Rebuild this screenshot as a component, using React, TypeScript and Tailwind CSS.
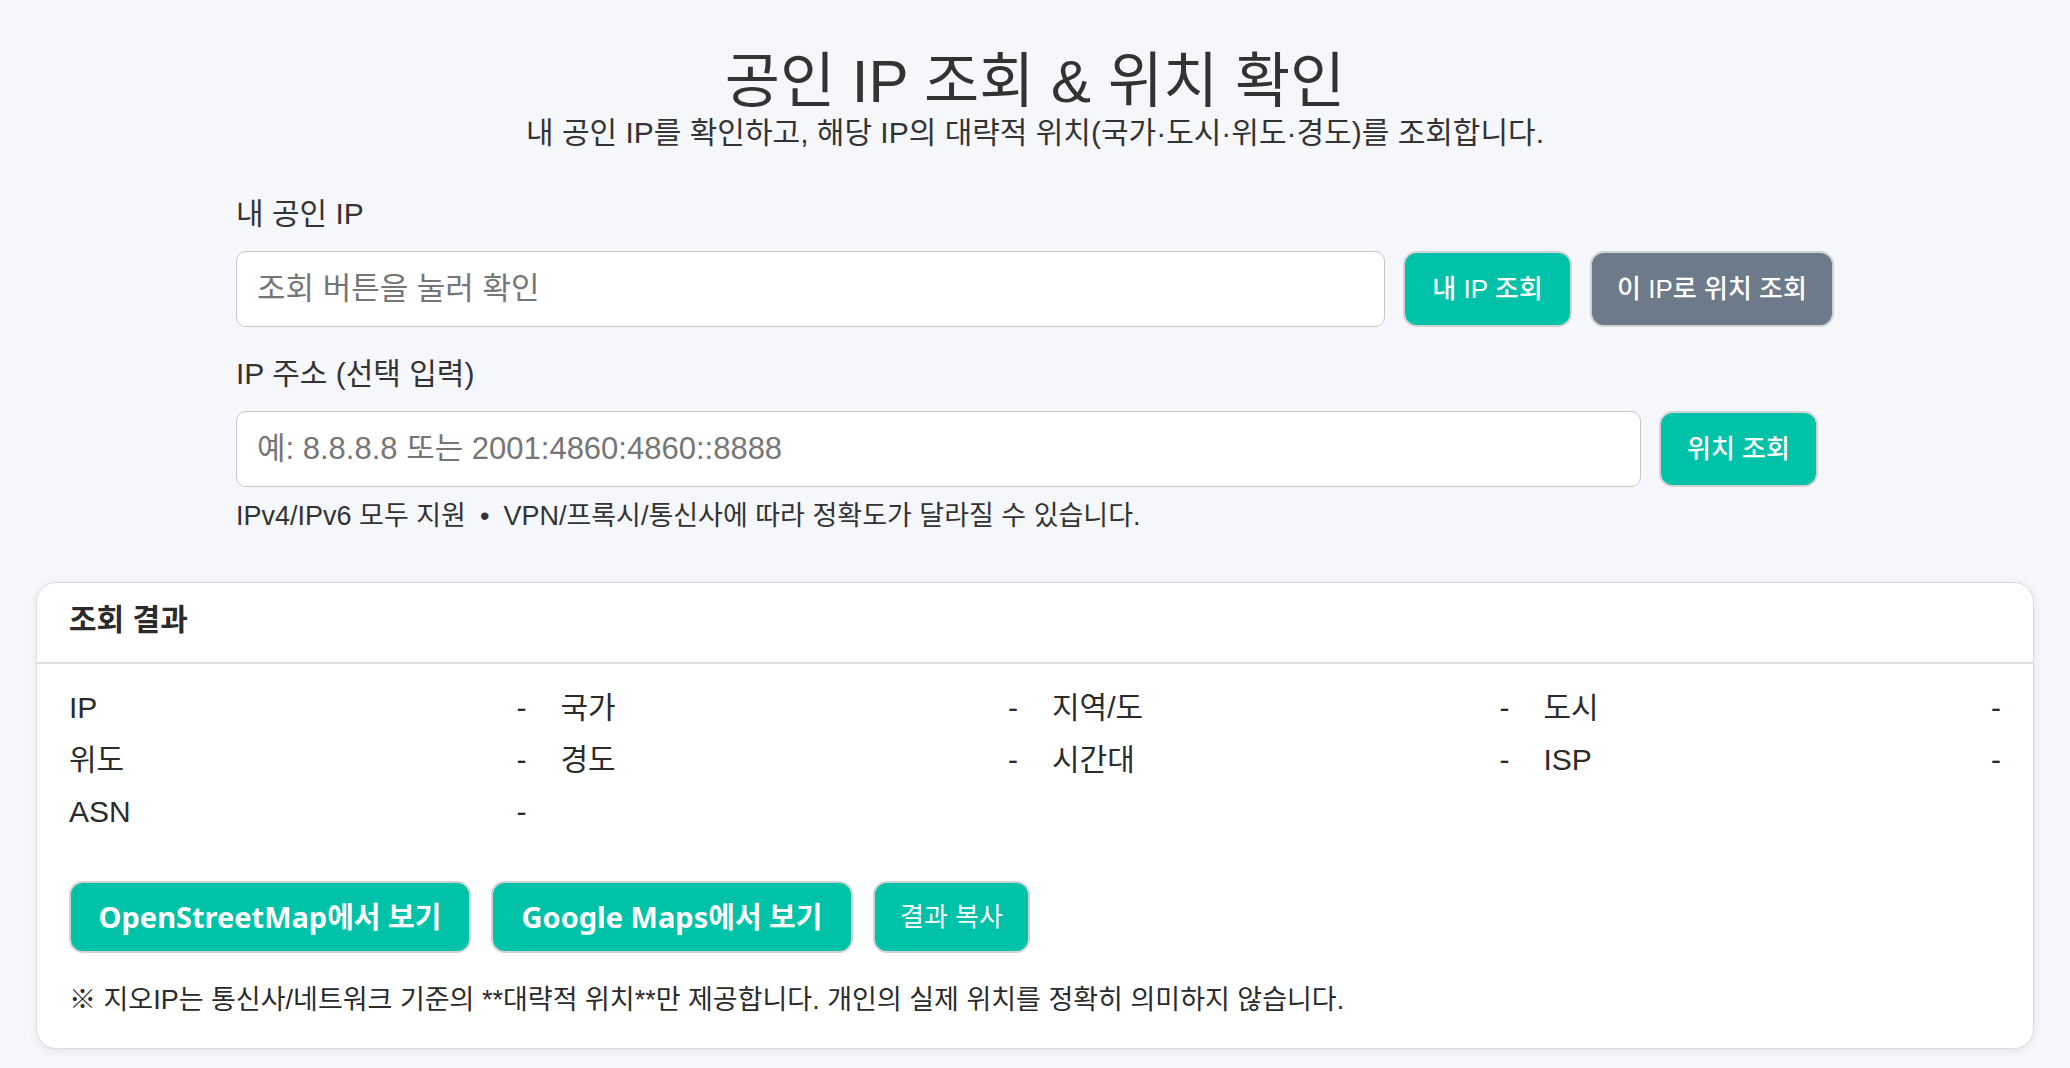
import React from "react";

const fields: [string, string][] = [
  ["IP", "-"],
  ["국가", "-"],
  ["지역/도", "-"],
  ["도시", "-"],
  ["위도", "-"],
  ["경도", "-"],
  ["시간대", "-"],
  ["ISP", "-"],
  ["ASN", "-"],
];

export default function App() {
  return (
    <div className="min-h-screen bg-[#f6f7fb] text-[#333] font-['Liberation_Sans','Noto_Sans_CJK_KR',sans-serif] pb-[21px]">
      {/* heading */}
      <header className="pt-[48px] text-center">
        <h1 className="text-[60px] leading-[68px] font-normal">공인 IP 조회 &amp; 위치 확인</h1>
        <p className="text-[30px] leading-[34px]">
          내 공인 IP를 확인하고, 해당 IP의 대략적 위치(국가·도시·위도·경도)를 조회합니다.
        </p>
      </header>

      {/* lookup form */}
      <section className="mx-auto w-[1598px] mt-[46px]">
        <label className="block text-[30px] leading-[36px]">내 공인 IP</label>
        <div className="mt-[19px] flex gap-[18px]">
          <input
            readOnly
            placeholder="조회 버튼을 눌러 확인"
            className="h-[76px] flex-1 rounded-[10px] border-[1.5px] border-[#c6c6c6] bg-white px-[20px] text-[31px] outline-none placeholder:text-[#767676]"
          />
          <button className="h-[76px] w-[169px] rounded-[14px] border-2 border-[#d2d2d2] bg-[#00c2a8] text-[26px] font-medium text-white">
            내 IP 조회
          </button>
          <button className="h-[76px] w-[244px] rounded-[14px] border-2 border-[#d2d2d2] bg-[#6d7a8a] text-[26px] font-medium text-white">
            이 IP로 위치 조회
          </button>
        </div>

        <label className="mt-[29px] block text-[30px] leading-[36px]">IP 주소 (선택 입력)</label>
        <div className="mt-[19px] flex gap-[18px] pr-[16px]">
          <input
            placeholder="예: 8.8.8.8 또는 2001:4860:4860::8888"
            className="h-[76px] flex-1 rounded-[10px] border-[1.5px] border-[#c6c6c6] bg-white px-[20px] text-[31px] outline-none placeholder:text-[#767676]"
          />
          <button className="h-[76px] w-[159px] rounded-[14px] border-2 border-[#d2d2d2] bg-[#00c2a8] text-[26px] font-medium text-white">
            위치 조회
          </button>
        </div>
        <p className="mt-[13px] text-[27px] leading-[32px]">
          IPv4/IPv6 모두 지원<span className="mx-[14px]">•</span>VPN/프록시/통신사에 따라 정확도가 달라질 수 있습니다.
        </p>
      </section>

      {/* result card */}
      <section className="mx-[36px] mt-[50px] rounded-[20px] border-[1.5px] border-[#dcdcdc] bg-white shadow-[0_2px_10px_rgba(0,0,0,0.07)]">
        <div className="h-[81px] border-b-2 border-[#dedede] px-[32px] pt-[17px]">
          <h2 className="text-[30px] leading-[40px] font-bold text-[#2b2b2b]">조회 결과</h2>
        </div>
        <div className="px-[32px] pt-[17px] pb-[30px]">
          <div className="grid grid-cols-4 gap-x-[34px]">
            {fields.map(([k, v]) => (
              <div key={k} className="flex h-[52px] items-center justify-between text-[30px] text-[#2b2b2b]">
                <span>{k}</span>
                <span>{v}</span>
              </div>
            ))}
          </div>

          <div className="mt-[44px] flex gap-[20px]">
            <button className="h-[72px] w-[402px] rounded-[14px] border-2 border-[#d2d2d2] bg-[#00c2a8] font-['Noto_Sans','Noto_Sans_CJK_KR',sans-serif] text-[29px] font-bold text-white">
              OpenStreetMap에서 보기
            </button>
            <button className="h-[72px] w-[362px] rounded-[14px] border-2 border-[#d2d2d2] bg-[#00c2a8] font-['Noto_Sans','Noto_Sans_CJK_KR',sans-serif] text-[29px] font-bold text-white">
              Google Maps에서 보기
            </button>
            <button className="h-[72px] w-[157px] rounded-[14px] border-2 border-[#d2d2d2] bg-[#00c2a8] text-[26px] text-white">
              결과 복사
            </button>
          </div>

          <p className="mt-[29px] text-[27px] leading-[36px] text-[#2b2b2b]">
            ※ 지오IP는 통신사/네트워크 기준의 **대략적 위치**만 제공합니다. 개인의 실제 위치를 정확히 의미하지 않습니다.
          </p>
        </div>
      </section>
    </div>
  );
}
